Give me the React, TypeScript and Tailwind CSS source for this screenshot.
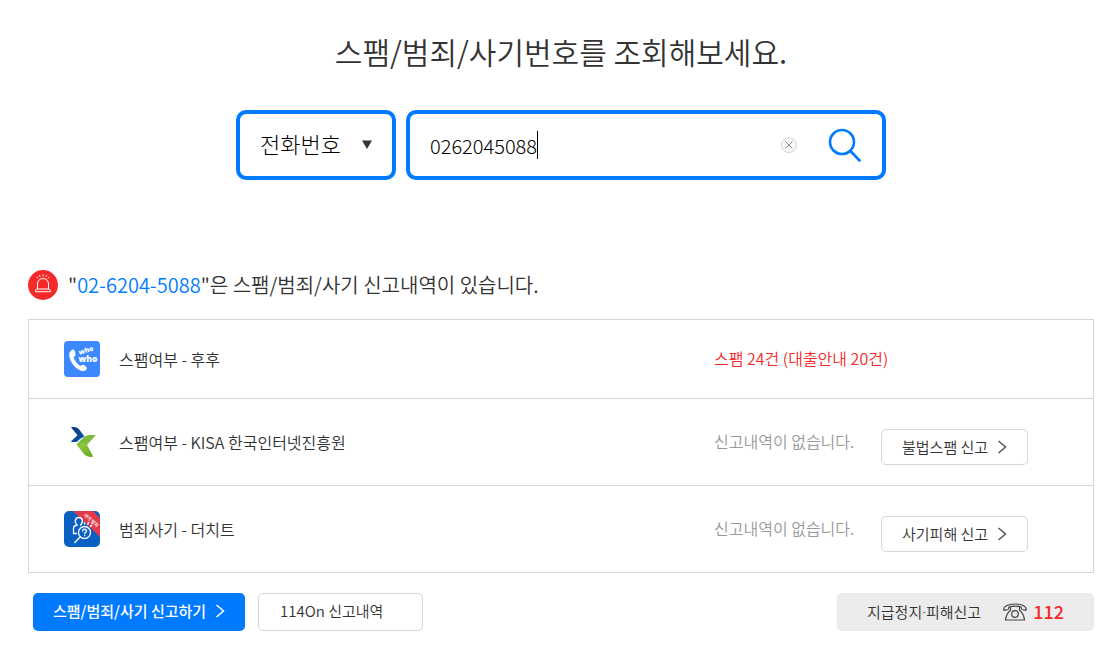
import { useState } from 'react'

const reports = [
  {
    id: 'whowho',
    name: '스팸여부 - 후후',
    result: '스팸 24건 (대출안내 20건)',
    found: true,
    action: ''
  },
  {
    id: 'kisa',
    name: '스팸여부 - KISA 한국인터넷진흥원',
    result: '신고내역이 없습니다.',
    found: false,
    action: '불법스팸 신고'
  },
  {
    id: 'thecheat',
    name: '범죄사기 - 더치트',
    result: '신고내역이 없습니다.',
    found: false,
    action: '사기피해 신고'
  }
]

function WhoWhoLogo() {
  return (
    <svg className="block size-9" viewBox="0 0 36 36" aria-hidden="true">
      <rect width="36" height="36" rx="4" fill="#3d87ff" />
      <path
        d="M8.3 8.7c1.4-.6 2.3.5 2.8 2.3.5 1.700.8 3.400-.2 4.200l-1.300 1.100c1 3.400 3.600 6.700 6.700 8.700l1.700-1.100c1.200-.7 2.500.3 3.600 1.400 1.300 1.300 1.700 2.200.8 3.200-1.300 1.600-3.500 2.100-5.700 1.100C10.900 27.300 6.400 21.500 5.300 15c-.4-2.700.6-5.200 3-6.300z"
        fill="#fff"
      />
      <g fill="#fff" fontFamily="'Open Sans', sans-serif" fontWeight="800">
        <text x="15.500" y="14" fontSize="6.800" transform="rotate(-18 15.500 14)">who</text>
        <text x="14.500" y="20.500" fontSize="8.500">who</text>
      </g>
    </svg>
  )
}

function KisaLogo() {
  return (
    <svg className="block size-9" viewBox="0 0 36 36" aria-hidden="true">
      <defs>
        <linearGradient id="kisaBlue" x1="0" y1="0" x2="1" y2="1">
          <stop offset="0" stopColor="#06346f" />
          <stop offset="1" stopColor="#0a5db5" />
        </linearGradient>
        <linearGradient id="kisaGreen" x1="0" y1="0" x2="0.300" y2="1">
          <stop offset="0" stopColor="#6cae2b" />
          <stop offset="0.500" stopColor="#8dc63f" />
          <stop offset="1" stopColor="#72b02c" />
        </linearGradient>
      </defs>
      <path d="M7 3.200c4-.5 6.500.3 8.200 2.300l5.300 7c-3 1-5.500 3-7.500 5.300-2 .5-4.200.3-6.200-.3l6.700-6.200z" fill="url(#kisaBlue)" />
      <path d="M31.500 11.300c-6.300-.8-9.800.2-12.500 3L12.500 20.500l7 9c2.200 2.800 5 3.800 9.900 3.300L23 21z" fill="url(#kisaGreen)" />
      <path d="M31.500 11.300c-6.800-.8-10 .4-12.700 3.200l-6.300 6c4-2.800 8.500-3.800 12.700-2.500z" fill="#7db93a" />
    </svg>
  )
}

function TheCheatLogo() {
  return (
    <svg className="block size-9" viewBox="0 0 36 36" aria-hidden="true">
      <defs>
        <clipPath id="cheatClip">
          <rect width="36" height="36" rx="5" />
        </clipPath>
      </defs>
      <g clipPath="url(#cheatClip)">
        <rect width="36" height="36" fill="#0b60c4" />
        <path d="M9 0h20l7 7v19z" fill="#e13a4b" />
        <text
          x="19.500"
          y="4.500"
          fontSize="4.500"
          fontWeight="700"
          fill="#fff"
          fontFamily="'Noto Sans CJK KR', sans-serif"
          transform="rotate(42 19.500 4.500)"
        >
          사기 방지
        </text>
        <g fill="none" stroke="#fff" strokeWidth="1.300" strokeLinecap="round" strokeLinejoin="round">
          <path d="M12.500 22.500h-3v-5.300c0-1.800 1-2.700 3.800-3.200-1.700-1.300-2.300-3-1.900-4.800.4-1.700 1.700-2.700 3.400-2.700s3.100 1 3.500 2.700c.4 1.800-.2 3.500-1.700 4.800" />
          <circle cx="20.500" cy="21.500" r="6" />
          <path d="m16.300 25.800-5.500 5.700" />
          <path d="m20.800 13-.3-1.300M23.700 13.500l.8-2M26.300 15.500l1.500-1.500" />
          <path d="M18.700 20c0-2.500 4-2.300 3.800 0-.1 1.300-1.800 1.300-1.800 2.700M20.700 24.500v.1" />
        </g>
      </g>
    </svg>
  )
}

function Logo({ id }: { id: string }) {
  if (id === 'whowho') return <WhoWhoLogo />
  if (id === 'kisa') return <KisaLogo />
  return <TheCheatLogo />
}

function Chevron({ className }: { className?: string }) {
  return (
    <svg className={className} width="10" height="14" viewBox="0 0 10 14" fill="none" stroke="currentColor" strokeWidth="1.500" aria-hidden="true">
      <path d="M1.500 1 8.500 7l-7 6" />
    </svg>
  )
}

export default function App() {
  const [number, setNumber] = useState('0262045088')

  return (
    <main className="bg-white pt-8 pr-[25px] pb-5 pl-7 font-['Noto_Sans_CJK_KR','Noto_Sans',sans-serif] font-[350] text-[#333]">
      <h1 className="text-center text-[30px] leading-[38px]">스팸/범죄/사기번호를 조회해보세요.</h1>

      {/* Search */}
      <form className="mt-10 flex justify-center gap-2.5" onSubmit={(e) => e.preventDefault()}>
        <div className="relative h-[70px] w-40 rounded-[10px] border-4 border-[#007bff]">
          <select
            aria-label="조회 구분"
            className="h-full w-full appearance-none bg-transparent pr-8 pb-1 pl-5 text-[22px] font-light text-black outline-none"
          >
            <option>전화번호</option>
            <option>계좌번호</option>
          </select>
          <svg className="pointer-events-none absolute top-[26px] right-5" width="10" height="9" viewBox="0 0 10 9" aria-hidden="true">
            <path d="M0 .5h10L5 9z" fill="#333" />
          </svg>
        </div>

        <div className="flex h-[70px] w-[480px] items-center rounded-[10px] border-4 border-[#007bff] px-5">
          <label className="flex flex-1 items-center">
            <input
              type="text"
              aria-label="전화번호 입력"
              value={number}
              onChange={(e) => setNumber(e.target.value)}
              className="field-sizing-content h-11 bg-transparent text-xl leading-8 font-light text-black caret-transparent outline-none"
            />
            <span className="h-7 w-px bg-black" />
          </label>
          <button type="button" aria-label="지우기" onClick={() => setNumber('')}>
            <svg className="block" width="16" height="16" viewBox="0 0 16 16" fill="none" aria-hidden="true">
              <circle cx="8" cy="8" r="7.500" fill="#f8f8f8" stroke="#d5d5d5" />
              <path d="m4.500 4.500 7 7m0-7-7 7" stroke="#8c8c8c" />
            </svg>
          </button>
          <button type="submit" aria-label="조회" className="ml-[31px]">
            <svg className="block" width="34" height="34" viewBox="0 0 34 34" fill="none" stroke="#007bff" aria-hidden="true">
              <circle cx="14" cy="14" r="12" strokeWidth="2.600" />
              <path d="m22.500 23 9 9.500" strokeWidth="2.600" strokeLinecap="round" />
            </svg>
          </button>
        </div>
      </form>

      {/* Result summary */}
      <div className="mt-[90px] flex items-center gap-2.5">
        <svg width="30" height="30" viewBox="0 0 30 30" fill="none" stroke="#fff" strokeLinecap="round" strokeLinejoin="round" aria-hidden="true">
          <circle cx="15" cy="15" r="15" fill="#f42a2a" stroke="none" />
          <path d="M9.500 19v-5c0-3.200 2.300-5.500 5.500-5.500s5.500 2.300 5.500 5.500v5M9.500 19h11l2 1.300v1.400h-15v-1.400z" />
          <path d="M15 6V4.800M12 6.500l-.5-1M18 6.500l.5-1M9.800 8 9 7.200M20.200 8l.8-.8" />
        </svg>
        <h2 className="text-xl leading-[30px]">
          "<span className="text-[#007bff]">02-6204-5088</span>"은 스팸/범죄/사기 신고내역이 있습니다.
        </h2>
      </div>

      <table className="mt-[19px] w-full border-separate border-spacing-0 border border-[#d6d6d6] text-base">
        <tbody>
          {reports.map((report) => (
            <tr key={report.id} className="group h-[87px] first:h-[79px] last:h-[86px]">
              <td className="border-b border-[#d6d6d6] p-0 pl-[35px] group-last:border-b-0">
                <div className="flex items-center gap-[19px]">
                  <Logo id={report.id} />
                  <span>{report.name}</span>
                </div>
              </td>
              <td
                className={`border-b border-[#d6d6d6] p-0 pb-0.5 group-last:border-b-0 ${report.action ? 'w-[167px]' : ''} ${report.found ? 'text-[#f42a2a]' : 'text-[#999]'}`}
                colSpan={report.action ? 1 : 2}
              >
                {report.result}
              </td>
              {report.action && (
                <td className="w-[212px] border-b border-[#d6d6d6] p-0 pt-2.5 group-last:border-b-0">
                  <button type="button" className="flex h-9 w-[147px] items-center justify-between rounded-[5px] border border-[#d6d6d6] px-5 text-[15px]">
                    {report.action}
                    <Chevron className="text-[#555]" />
                  </button>
                </td>
              )}
            </tr>
          ))}
        </tbody>
      </table>

      {/* Bottom actions */}
      <div className="mt-5 flex text-[15px]">
        <button type="button" className="ml-[5px] flex h-[38px] w-[212px] items-center justify-between rounded-[5px] bg-[#007bff] px-5 pb-0.5 font-medium text-white">
          스팸/범죄/사기 신고하기
          <Chevron />
        </button>
        <button type="button" className="ml-[13px] h-[38px] w-[165px] rounded-[5px] border border-[#d6d6d6] pb-0.5 pl-[21px] text-left">
          114On 신고내역
        </button>
        <div className="ml-auto flex h-[38px] w-[257px] items-center rounded-[5px] bg-[#ececec] px-[30px]">
          <span>
            지급정지<span className="font-['Noto_Sans',sans-serif]">·</span>피해신고
          </span>
          <svg className="ml-auto" width="24" height="18" viewBox="0 0 24 18" fill="none" stroke="#444" strokeWidth="1.200" strokeLinejoin="round" aria-hidden="true">
            <path d="M1 7.300C-.3 3.500 5 1 12 1s12.300 2.500 11 6.300l-4-.8c-.8-.2-.8-1.700-.8-2.500-3.700-1-8.700-1-12.400 0 0 .8 0 2.300-.8 2.500z" />
            <path d="M7.500 4v3.200c-2.500 2-4.500 5-5 9.800h19c-.5-4.800-2.500-7.800-5-9.800V4" />
            <circle cx="12" cy="11" r="3.300" />
          </svg>
          <a href="tel:112" className="ml-1.5 pb-0.5 text-lg font-medium text-[#f42a2a]">112</a>
        </div>
      </div>
    </main>
  )
}
